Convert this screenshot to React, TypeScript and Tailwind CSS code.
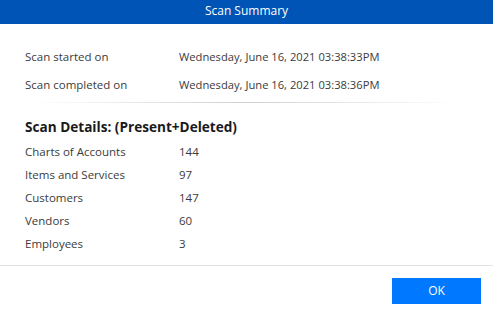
const dates = [
  { label: 'Scan started on', value: 'Wednesday, June 16, 2021 03:38:33PM' },
  { label: 'Scan completed on', value: 'Wednesday, June 16, 2021 03:38:36PM' },
];

const details = [
  { label: 'Charts of Accounts', count: 144 },
  { label: 'Items and Services', count: 97 },
  { label: 'Customers', count: 147 },
  { label: 'Vendors', count: 60 },
  { label: 'Employees', count: 3 },
];

export default function App() {
  return (
    <div className="w-[493px] h-[312px] bg-white flex flex-col font-['Open_Sans',sans-serif] text-[#3b3b3b]">
      {/* Title bar */}
      <div className="h-6 bg-[#0054b6] text-white text-[12px] flex items-center justify-center pb-[2px]">
        Scan Summary
      </div>

      {/* Scan dates */}
      <div className="flex flex-col pt-[19px] px-[25px] text-[11.5px]">
        {dates.map((d) => (
          <div key={d.label} className="flex h-[28px] items-center">
            <span className="w-[154px]">{d.label}</span>
            <span className="text-[11.2px]">{d.value}</span>
          </div>
        ))}
      </div>

      <div className="mx-[33px] mt-[3px] h-px bg-gradient-to-r from-white via-[#d0d0d0] to-white" />

      {/* Details */}
      <div className="flex flex-col px-[25px] pt-[14px] text-[11.5px]">
        <div className="font-bold text-[13.6px] text-[#1a1a1a] h-[20px] flex items-center">
          Scan Details: (Present+Deleted)
        </div>
        <div className="flex flex-col mt-[3px]">
          {details.map((r) => (
            <div key={r.label} className="flex h-[23px] items-center">
              <span className="w-[154px]">{r.label}</span>
              <span>{r.count}</span>
            </div>
          ))}
        </div>
      </div>

      {/* Footer */}
      <div className="mt-auto border-t border-[#e3e3e3] h-[47px] flex items-start justify-end pr-3 pt-3">
        <button className="w-[89px] h-[26px] bg-[#0078ff] text-white text-[12px] flex items-center justify-center">
          OK
        </button>
      </div>
    </div>
  );
}
